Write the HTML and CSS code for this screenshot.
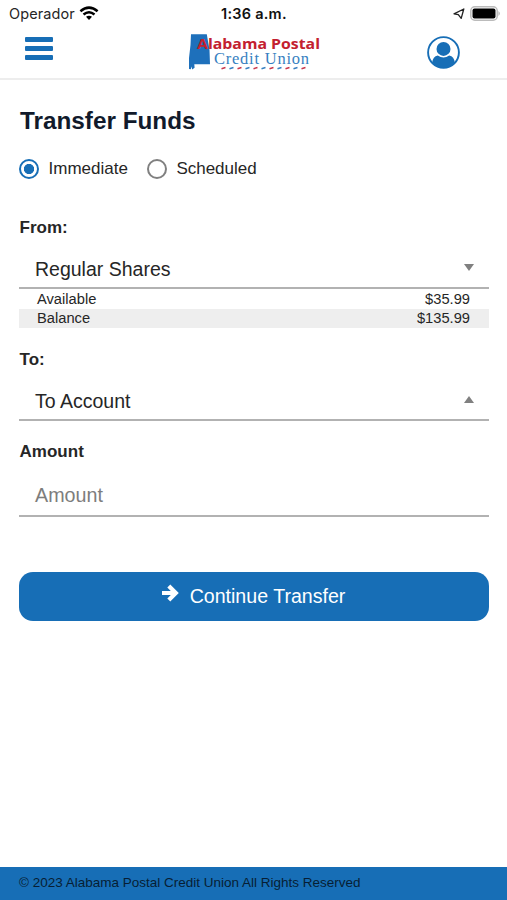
FILE: index.html
```html
<!DOCTYPE html>
<html lang="en">
<head>
<meta charset="utf-8">
<title>Transfer Funds</title>
<link rel="stylesheet" href="styles.css">
</head>
<body>
<div class="status">
  <div class="carrier"><span>Operador</span>
    <svg width="20" height="15" viewBox="0 0 20 15" fill="none" stroke="#000" stroke-width="2.5"><path d="M1.4 5.2Q10-2 18.6 5.2M4.5 8.5Q10 4 15.5 8.5"/><path d="M7 10.8Q10 8.5 13 10.8L10 14Z" fill="#000" stroke="none"/></svg>
  </div>
  <time class="clock">1:36 a.m.</time>
  <div class="indicators">
    <svg width="12" height="12" viewBox="0 0 12 12" fill="none" stroke="#222" stroke-width="1.3" stroke-linejoin="round"><path d="M10.8 1L1 5.8L5.3 6.6L8.2 10.4Z"/></svg>
    <svg width="31" height="15" viewBox="0 0 31 15"><rect x=".8" y=".8" width="26.4" height="13.4" rx="4" fill="#fff" stroke="#bbb" stroke-width="1.5"/><rect x="2.5" y="2.5" width="23" height="10" rx="2" fill="#000"/><path d="M28.5 5Q31 7.5 28.5 10Z" fill="#aaa"/></svg>
  </div>
</div>
<header class="header">
  <button class="menu" aria-label="Menu"><i></i><i></i><i></i></button>
  <svg class="logo" width="134" height="38" viewBox="188 33 134 38">
    <path d="M191 34.3H206.8L209.5 50L210 64.3H194.3L194.6 67.8L192.2 69.6L191.5 66.5L190.8 69.2L189 69V58L190.5 45Z" fill="#1e70bb"/>
    <text class="logo-top" x="197" y="49.2" textLength="123" lengthAdjust="spacingAndGlyphs">Alabama Postal</text>
    <text class="logo-bottom" x="214" y="64.2" textLength="95" lengthAdjust="spacing">Credit Union</text>
    <g stroke-width="1.5" fill="none"><path d="M221.5 68.7l4-1.2m12 1.2l4-1.2m12 1.2l4-1.2m12 1.2l4-1.2m12 1.2l4-1.2m12 1.2l4-1.2" stroke="#c9384c"/><path d="M229.5 68.7l4-1.2m12 1.2l4-1.2m12 1.2l4-1.2m12 1.2l4-1.2m12 1.2l4-1.2" stroke="#377fc1"/></g>
  </svg>
  <button class="profile" aria-label="Profile">
    <svg width="33" height="33" viewBox="0 0 33 33"><circle cx="16.5" cy="16.5" r="15.4" fill="#fff" stroke="#176eb6" stroke-width="1.9"/><circle cx="16.5" cy="12.9" r="7" fill="#176eb6"/><path d="M5.2 26.8Q5.8 20 10.8 19.4Q16.5 23.6 22.2 19.4Q27.2 20 27.8 26.8Q22.5 32 16.5 32T5.2 26.8Z" fill="#176eb6"/></svg>
  </button>
</header>
<main class="content">
  <h1>Transfer Funds</h1>
  <div class="modes">
    <label><span class="radio checked"></span>Immediate</label>
    <label><span class="radio"></span>Scheduled</label>
  </div>
  <h2 class="from-label">From:</h2>
  <div class="field"><span>Regular Shares</span><svg width="10" height="7" viewBox="0 0 10 7"><path d="M0 0H10L5 7Z" fill="#808080"/></svg></div>
  <dl class="balances">
    <div><dt>Available</dt><dd>$35.99</dd></div>
    <div class="shaded"><dt>Balance</dt><dd>$135.99</dd></div>
  </dl>
  <h2 class="to-label">To:</h2>
  <div class="field"><span>To Account</span><svg width="10" height="7" viewBox="0 0 10 7"><path d="M0 7H10L5 0Z" fill="#808080"/></svg></div>
  <h2 class="amount-label">Amount</h2>
  <div class="field amount"><span>Amount</span></div>
  <button class="submit">
    <svg width="17" height="18" viewBox="0 0 17 18" fill="none" stroke="#fff" stroke-width="4.2"><path d="M0 9H13M6.8 2L13.8 9L6.8 16"/></svg>
    <span>Continue Transfer</span>
  </button>
</main>
<footer class="footer">© 2023 Alabama Postal Credit Union All Rights Reserved</footer>
</body>
</html>
```
FILE: styles.css
```css
* { box-sizing: border-box; }
body {
  margin: 0;
  height: 900px;
  display: flex;
  flex-direction: column;
  background: #fff;
  color: #262626;
  font-family: "Liberation Sans", Arial, sans-serif;
}
button { border: 0; padding: 0; background: none; font: inherit; }
svg { display: block; flex: none; }
.status {
  height: 28px;
  padding: 0 6px 0 9px;
  display: grid;
  grid-template-columns: 212px auto 1fr;
  align-items: center;
  font-family: Inter, sans-serif;
  font-size: 14.5px;
}
.carrier { display: flex; align-items: center; gap: 4px; margin-top: -1px; letter-spacing: .1px; }
.clock { font-weight: 600; color: #111; letter-spacing: .25px; margin-top: -1px; }
.indicators { display: flex; align-items: center; justify-content: flex-end; gap: 5px; margin-top: -2px; }
.indicators svg:first-child { margin-top: 1px; }
.header {
  height: 52px;
  flex: none;
  padding: 5px 47px 0 25px;
  display: flex;
  align-items: flex-start;
  border-bottom: 2px solid #ededed;
}
.menu { width: 28px; margin-top: 4px; display: grid; gap: 4px; }
.menu i { height: 5px; border-radius: 1px; background: #176eb6; }
.logo { margin-left: 135px; }
.logo-top { font: 700 14.3px "Open Sans", sans-serif; fill: #c3202f; }
.logo-bottom { font: 16.5px "Liberation Serif", serif; fill: #377fc1; }
.profile { margin-top: 3px; margin-left: auto; }
.content { flex: 1; padding: 26px 18px 0 19px; }
h1 { margin: 0; font-size: 24.3px; line-height: 30px; color: #111a2b; text-indent: 1px; }
.modes { height: 20px; margin-top: 23px; display: flex; gap: 19px; }
.modes label { display: flex; align-items: center; gap: 9.5px; font-size: 17px; line-height: 20px; }
.radio { width: 20px; height: 20px; border: 2.5px solid #808080; border-radius: 50%; }
.radio.checked { border-color: #176eb6; background: radial-gradient(circle, #176eb6 4.8px, #fff 5.4px); }
h2 { margin: 0; font-size: 17px; line-height: 20px; text-indent: .6px; }
.from-label { margin-top: 39px; }
.field {
  height: 51px;
  padding: 11px 15px 0 16px;
  display: flex;
  justify-content: space-between;
  font-size: 19.5px;
  border-bottom: 2px solid #b2b2b2;
}
.field span { line-height: 40px; }
.field svg { margin-top: 15px; }
.balances { margin: 0; font-size: 14.7px; line-height: 20px; }
.balances div { height: 20px; padding: 0 19px 0 18px; display: flex; justify-content: space-between; }
.balances .shaded { height: 19px; line-height: 19px; background: #eee; }
dd { margin: 0; }
.to-label { margin-top: 22px; }
.amount-label { margin-top: 21px; }
.amount { height: 55px; padding-top: 13px; color: #7d7d7d; font-size: 19.7px; }
.submit {
  width: 100%;
  height: 49px;
  margin-top: 55px;
  padding-right: 1px;
  display: flex;
  justify-content: center;
  align-items: center;
  gap: 11px;
  border-radius: 14px;
  background: #176eb6;
  color: #fff;
  font-size: 19.6px;
}
.submit svg { margin-top: -7px; }
.footer {
  height: 33px;
  padding-left: 19px;
  background: #176eb6;
  color: #071e34;
  font-size: 13.5px;
  line-height: 31px;
}
```
